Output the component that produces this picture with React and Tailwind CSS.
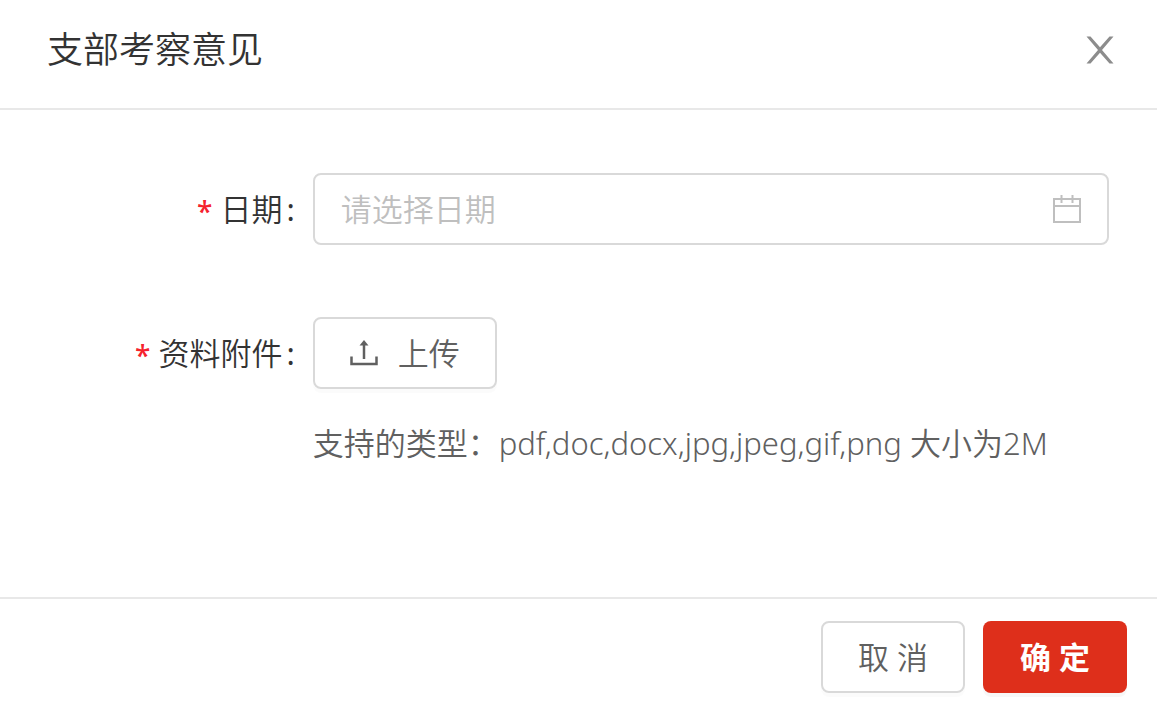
import React from "react";

function CloseIcon() {
  return (
    <svg viewBox="0 0 28 28" className="h-7 w-7" fill="currentColor" aria-hidden="true">
      <path d="M0.5 0.5 H4.5 L14 11.3 L23.5 0.5 H27.5 L16 14 L27.5 27.5 H23.5 L14 16.7 L4.5 27.5 H0.5 L12 14 Z" />
    </svg>
  );
}

function CalendarIcon() {
  return (
    <svg viewBox="0 0 28 28" className="h-7 w-7" fill="none" stroke="currentColor" strokeWidth="2" aria-hidden="true">
      <path d="M1 4 H27 V27 H1 Z M1 11 H27 M8.5 0 V8 M19.5 0 V8" />
    </svg>
  );
}

function UploadIcon() {
  return (
    <svg viewBox="0 0 28 26" className="h-[26px] w-7" fill="none" stroke="currentColor" aria-hidden="true">
      <path d="M14 3 V19" strokeWidth="2.5" />
      <path d="M14 0 L18.5 5.5 H9.5 Z" fill="currentColor" stroke="none" />
      <path d="M1.5 16.5 V24 H26.5 V16.5" strokeWidth="2.5" />
    </svg>
  );
}

function FormRow({ label, htmlFor, children }) {
  return (
    <div className="flex items-start">
      <label
        htmlFor={htmlFor}
        className="flex h-18 w-[28.2%] shrink-0 items-center justify-end pr-[18px] text-[#333333]"
      >
        <span className="mr-2 pt-1 font-['Noto_Sans'] text-[28px] font-medium text-[#f5222d]">*</span>
        <span>{label}</span>
        <span className="ml-1 font-normal">:</span>
      </label>
      <div className="min-w-0 flex-1">{children}</div>
    </div>
  );
}

export default function App() {
  return (
    <section
      role="dialog"
      aria-labelledby="dialog-title"
      className="w-full bg-white font-['Noto_Sans','Noto_Sans_CJK_SC',sans-serif] text-[31px] leading-12 font-[350] text-[#606060]"
    >
      <header className="flex h-[110px] items-center justify-between border-b-2 border-[#e8e8e8] pr-[43px] pb-2 pl-[47px]">
        <h1 id="dialog-title" className="text-4xl font-[350] text-[#333333]">支部考察意见</h1>
        <button type="button" aria-label="关闭" className="text-[#8c8c8c]">
          <CloseIcon />
        </button>
      </header>

      <form className="flex flex-col gap-18 pt-[63px] pr-12 pb-32">
        <FormRow label="日期" htmlFor="date">
          <div className="flex h-18 items-center rounded-lg border-2 border-[#d9d9d9] px-[26px]">
            <input
              id="date"
              type="text"
              placeholder="请选择日期"
              className="min-w-0 flex-1 font-[350] outline-none placeholder:text-[#bfbfbf]"
            />
            <span className="text-[#bfbfbf]">
              <CalendarIcon />
            </span>
          </div>
        </FormRow>

        <FormRow label="资料附件" htmlFor="upload">
          <button
            id="upload"
            type="button"
            className="flex h-18 items-center gap-5 rounded-lg border-2 border-[#d9d9d9] px-[35px] font-[350] shadow-[0_4px_0_rgba(0,0,0,0.015)]"
          >
            <UploadIcon />
            上传
          </button>
          <p className="mt-[30px] mb-0.5 whitespace-nowrap">支持的类型：pdf,doc,docx,jpg,jpeg,gif,png 大小为2M</p>
        </FormRow>
      </form>

      <footer className="flex justify-end gap-[18px] border-t-2 border-[#e8e8e8] pt-[22px] pr-[30px] pb-4">
        <button
          type="button"
          className="h-18 w-36 rounded-lg border-2 border-[#d9d9d9] font-[350] shadow-[0_4px_0_rgba(0,0,0,0.015)]"
        >
          取 消
        </button>
        <button
          type="button"
          className="h-18 w-36 rounded-lg bg-[#de2f1b] font-bold text-white shadow-[0_4px_0_rgba(0,0,0,0.03)]"
        >
          确 定
        </button>
      </footer>
    </section>
  );
}
